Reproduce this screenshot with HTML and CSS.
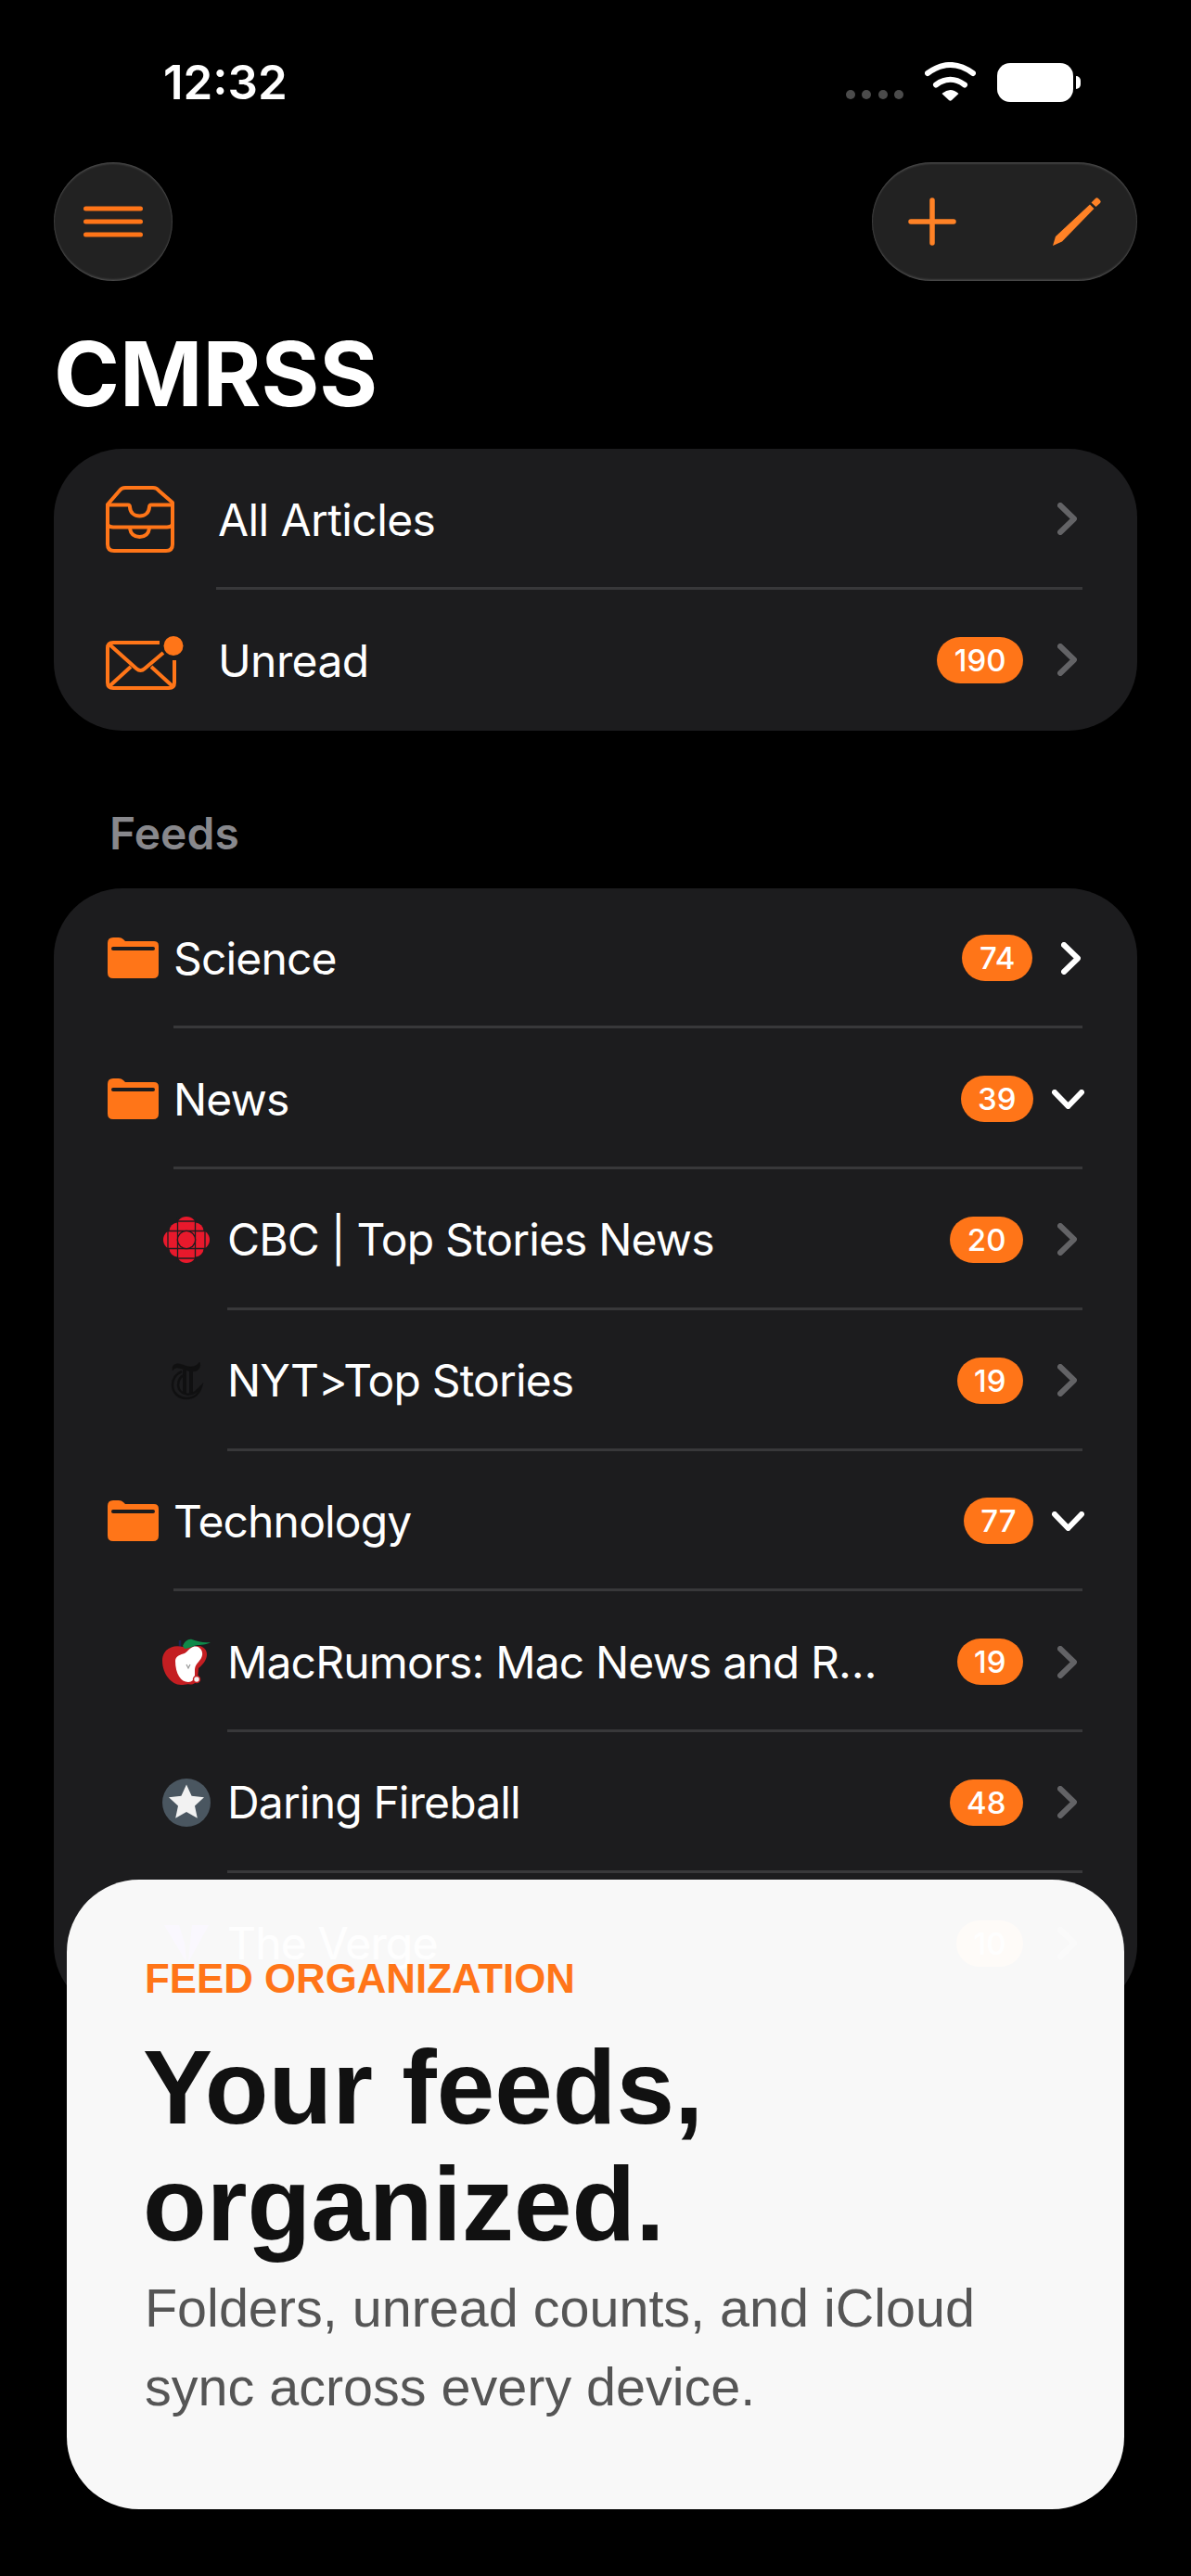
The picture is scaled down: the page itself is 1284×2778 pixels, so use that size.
FILE: index.html
```html
<!DOCTYPE html>
<html lang="en">
  <head>
    <meta charset="UTF-8" />
    <title>CMRSS</title>
    <link rel="stylesheet" href="styles.css">
  </head>
  <body>
    <div class="status-bar">
      <span class="status-time">12:32</span>
      <div class="status-icons">
        <div class="signal"><i></i><i></i><i></i><i></i></div>
        <svg class="wifi" viewBox="0 0 55 42" width="55" height="42">
          <path d="M3 12Q27.5 -6 52 12" fill="none" stroke="#fff" stroke-width="6" stroke-linecap="round" />
          <path d="M12 24.5Q27.5 13 43 24.5" fill="none" stroke="#fff" stroke-width="6" stroke-linecap="round" />
          <path d="M18.5 34Q27.5 26 36.500 34L29 41Q27.500 42.500 26 41Z" fill="#fff" />
        </svg>
        <div class="battery"></div>
      </div>
    </div>

    <main class="screen">
      <div class="toolbar">
        <button class="glass glass-round">
          <svg viewBox="0 0 64 34" width="64" height="34">
            <path d="M2.500 3H61.500M2.500 17H61.500M2.500 31H61.500" stroke="#ff7518" stroke-width="5" stroke-linecap="round" />
          </svg>
        </button>
        <div class="glass glass-pill">
          <svg viewBox="0 0 52 52" width="52" height="52">
            <path d="M26 3V49M3 26H49" stroke="#ff8226" stroke-width="5.500" stroke-linecap="round" />
          </svg>
          <svg viewBox="0 0 56 56" width="56" height="56">
            <path d="M2 54L5 44L42 9.500L46.500 14L12 49.500Z" fill="#ff8226" />
            <path d="M43.500 7.500L48 3Q49.500 1.500 51 3L53 5Q54.500 6.500 53 8L48.500 12Z" fill="#ff8226" />
          </svg>
        </div>
      </div>

      <h1 class="title">CMRSS</h1>

      <section class="group">
        <div class="row row-top">
          <div class="row-icon">
            <svg viewBox="0 0 74 72" width="74" height="72" fill="none" stroke="#ff7518" stroke-width="4">
              <path d="M2 20L15 5Q17 2 21 2H51Q55 2 57 5L72 18V63Q72 70 65 70H9Q2 70 2 63Z" stroke-linejoin="round" />
              <path d="M2 20.500H24Q26 20.500 26 23C26.500 29 31 32.500 36.500 32.500C42 32.500 46.500 29 47 23Q47 20.500 49 20.500H72" />
              <path d="M2 42Q4 44.500 8 44.500H66Q70 44.500 72 42" />
              <path d="M26 46C27 52 31 55 36.500 55C42 55 46 52 47 46" />
            </svg>
          </div>
          <div class="row-main">
            <span class="row-label">All Articles</span>
            <svg class="chev" viewBox="0 0 21 35" width="21" height="35"><path d="M3 3L18 17.500L3 32" /></svg>
          </div>
        </div>
        <div class="row row-top">
          <div class="row-icon">
            <svg class="mail-icon" viewBox="0 0 76 64" width="76" height="64" fill="none" stroke="#ff7518" stroke-width="4">
              <path d="M58 13H8Q2 13 2 19V56Q2 62 8 62H68Q74 62 74 56V32" />
              <path d="M4 15L33 41Q37.500 45 42 41L62 24" />
              <path d="M4 60L27 39M72 60L49 39" />
              <circle cx="73" cy="16.500" r="10.500" fill="#ff7518" stroke="none" />
            </svg>
          </div>
          <div class="row-main no-line">
            <span class="row-label">Unread</span>
            <span class="badge">190</span>
            <svg class="chev" viewBox="0 0 21 35" width="21" height="35"><path d="M3 3L18 17.500L3 32" /></svg>
          </div>
        </div>
      </section>

      <h2 class="section-title">Feeds</h2>

      <section class="group">
        <div class="row row-folder">
          <div class="row-icon">
            <svg viewBox="0 0 55 44" width="55" height="44">
              <path d="M0 6Q0 0 6 0H12Q15 0 17 2L19 4H50Q55 4 55 9V38Q55 44 49 44H6Q0 44 0 38Z" fill="#ff7518" />
              <rect x="4" y="10" width="47" height="4" rx="2" fill="#1c1c1e" />
            </svg>
          </div>
          <div class="row-main">
            <span class="row-label">Science</span>
            <span class="badge">74</span>
            <svg class="chev chev-white" viewBox="0 0 21 35" width="21" height="35"><path d="M3 3L18 17.500L3 32" /></svg>
          </div>
        </div>

        <div class="row row-folder">
          <div class="row-icon">
            <svg viewBox="0 0 55 44" width="55" height="44">
              <path d="M0 6Q0 0 6 0H12Q15 0 17 2L19 4H50Q55 4 55 9V38Q55 44 49 44H6Q0 44 0 38Z" fill="#ff7518" />
              <rect x="4" y="10" width="47" height="4" rx="2" fill="#1c1c1e" />
            </svg>
          </div>
          <div class="row-main">
            <span class="row-label">News</span>
            <span class="badge">39</span>
            <svg class="chev chev-white chev-open" viewBox="0 0 35 21" width="35" height="21"><path d="M3 3L17.500 18L32 3" /></svg>
          </div>
        </div>

        <div class="row row-feed">
          <div class="row-icon">
            <svg viewBox="0 0 50 50" width="50" height="50">
              <g fill="#e8192c">
                <circle cx="25" cy="11" r="11" />
                <circle cx="25" cy="39" r="11" />
                <circle cx="11" cy="25" r="11" />
                <circle cx="39" cy="25" r="11" />
                <circle cx="15.500" cy="15.500" r="9" />
                <circle cx="34.500" cy="15.500" r="9" />
                <circle cx="15.500" cy="34.500" r="9" />
                <circle cx="34.500" cy="34.500" r="9" />
              </g>
              <path d="M15.500 0V50M34.500 0V50M0 15.500H50M0 34.500H50" stroke="#1c1c1e" stroke-width="1.300" />
              <path d="M15.500 5H34.500M15.500 45H34.500M5 15.500V34.500M45 15.500V34.500" stroke="#1c1c1e" stroke-width="1.300" />
              <circle cx="25" cy="25" r="10.300" fill="#1c1c1e" />
              <circle cx="25" cy="25" r="9" fill="#e8192c" />
            </svg>
          </div>
          <div class="row-main">
            <span class="row-label">CBC | Top Stories News</span>
            <span class="badge">20</span>
            <svg class="chev" viewBox="0 0 21 35" width="21" height="35"><path d="M3 3L18 17.500L3 32" /></svg>
          </div>
        </div>

        <div class="row row-feed">
          <div class="row-icon">
            <svg viewBox="0 0 34 42" width="34" height="42" fill="none" stroke="#101011">
              <path d="M2 6C5 1 10 3 16 5C22 7 28 6 31 1C33 6 30 11 24 11C18 11 12 7 7 7C5 7 3 8 2 10Z" fill="#101011" stroke-width="0.500" />
              <path d="M15 9V35" stroke-width="4" />
              <path d="M22 10V34" stroke-width="4" />
              <path d="M12 11C5 14 2 20 2 26C2 34 9 40 17 40C25 40 31 35 33 27L27 33C22 37 13 37 9 30C7 25 8 18 14 15" stroke-width="2.500" />
            </svg>
          </div>
          <div class="row-main">
            <span class="row-label">NYT&gt;Top Stories</span>
            <span class="badge">19</span>
            <svg class="chev" viewBox="0 0 21 35" width="21" height="35"><path d="M3 3L18 17.500L3 32" /></svg>
          </div>
        </div>

        <div class="row row-folder">
          <div class="row-icon">
            <svg viewBox="0 0 55 44" width="55" height="44">
              <path d="M0 6Q0 0 6 0H12Q15 0 17 2L19 4H50Q55 4 55 9V38Q55 44 49 44H6Q0 44 0 38Z" fill="#ff7518" />
              <rect x="4" y="10" width="47" height="4" rx="2" fill="#1c1c1e" />
            </svg>
          </div>
          <div class="row-main">
            <span class="row-label">Technology</span>
            <span class="badge">77</span>
            <svg class="chev chev-white chev-open" viewBox="0 0 35 21" width="35" height="21"><path d="M3 3L17.500 18L32 3" /></svg>
          </div>
        </div>

        <div class="row row-feed">
          <div class="row-icon">
            <svg viewBox="0 0 52 50" width="52" height="50">
              <path d="M19 2V9" stroke="#1b2350" stroke-width="2.500" />
              <path d="M22 9C12 6 0 11 0 24C0 38 10 50 20 50C24 50 26 48.500 30 49.500C34 50 37 47 38 44L39 32C44 28 48 23 48 17C48 12 44 8 39 8C34 8 30 11 22 9Z" fill="#c41e22" />
              <path d="M14 24C14 19 20 17 24 16C28 14 28 11 33 9C39 7 44 12 43 18C42 24 36 26 35 33V40C35 44 32 47 28 47C20 47 14 38 14 24Z" fill="#fff" />
              <path d="M22 8C24 3 28 0 32 1C38 3 44 5 52 4C46 8 38 6 34 8C30 10 26 11 24 11Z" fill="#0f8a4a" />
              <circle cx="37" cy="44" r="3.500" fill="#f4f4f4" stroke="#c41e22" stroke-width="1.500" />
              <path d="M26 28L28 32L30 28" fill="none" stroke="#999" stroke-width="1.200" />
            </svg>
          </div>
          <div class="row-main">
            <span class="row-label">MacRumors: Mac News and R…</span>
            <span class="badge">19</span>
            <svg class="chev" viewBox="0 0 21 35" width="21" height="35"><path d="M3 3L18 17.500L3 32" /></svg>
          </div>
        </div>

        <div class="row row-feed">
          <div class="row-icon">
            <svg viewBox="0 0 52 52" width="52" height="52">
              <circle cx="26" cy="26" r="26" fill="#4a5660" />
              <path d="M26 6.500L31.600 18.800L45 20.300L35 29.400L37.800 42.700L26 36L14.200 42.700L17 29.400L7 20.300L20.400 18.800Z" fill="#f2f2f2" />
            </svg>
          </div>
          <div class="row-main">
            <span class="row-label">Daring Fireball</span>
            <span class="badge">48</span>
            <svg class="chev" viewBox="0 0 21 35" width="21" height="35"><path d="M3 3L18 17.500L3 32" /></svg>
          </div>
        </div>

        <div class="row row-feed">
          <div class="row-icon">
            <svg viewBox="0 0 48 40" width="48" height="40">
              <path d="M0 0H16L22 20L24 40ZM30 0H48L26 40L28 20Z" fill="#5200ff" />
            </svg>
          </div>
          <div class="row-main no-line">
            <span class="row-label">The Verge</span>
            <span class="badge">10</span>
            <svg class="chev" viewBox="0 0 21 35" width="21" height="35"><path d="M3 3L18 17.500L3 32" /></svg>
          </div>
        </div>
      </section>
    </main>

    <aside class="promo">
      <p class="promo-eyebrow">FEED ORGANIZATION</p>
      <h3 class="promo-title">Your feeds,<br>organized.</h3>
      <p class="promo-text">Folders, unread counts, and iCloud<br>sync across every device.</p>
    </aside>
  </body>
</html>
```

FILE: styles.css
```css
body {
  position: relative;
  width: 1284px;
  height: 2778px;
  margin: 0;
  overflow: hidden;
  background-color: #000;
  color: #fff;
  font-family: Inter, "Noto Sans", sans-serif;
}

/* status bar */
.status-bar {
  display: flex;
  justify-content: space-between;
  box-sizing: border-box;
  height: 175px;
  padding: 67px 127px 0 176px;
}
.status-time {
  font-size: 51px;
  font-weight: 600;
  line-height: 44px;
}
.status-icons {
  display: flex;
  align-items: flex-start;
  gap: 23px;
}
.signal {
  display: flex;
  gap: 7.4px;
  margin-top: 30px;
}
.signal i {
  width: 10px;
  height: 10px;
  border-radius: 50%;
  background-color: #4b4b4b;
}
.battery {
  position: relative;
  width: 82px;
  height: 42px;
  margin-top: 1px;
  border-radius: 14px;
  background-color: #fff;
}
.battery::after {
  content: "";
  position: absolute;
  top: 14px;
  left: 85px;
  width: 5px;
  height: 14px;
  border-radius: 0 6px 6px 0;
  background-color: #fff;
}

.screen {
  padding: 0 58px;
}

/* top buttons */
.toolbar {
  display: flex;
  justify-content: space-between;
}
.glass {
  display: flex;
  align-items: center;
  box-sizing: border-box;
  height: 128px;
  padding: 0;
  border: none;
  background-color: #222;
  box-shadow: inset 0 2px 2px rgba(255, 255, 255, 0.13),
    inset 0 -2px 2px rgba(255, 255, 255, 0.13),
    inset 0 0 0 1px rgba(255, 255, 255, 0.05);
}
.glass-round {
  justify-content: center;
  width: 128px;
  border-radius: 50%;
}
.glass-pill {
  justify-content: space-between;
  width: 286px;
  padding: 0 37px 0 39px;
  border-radius: 64px;
}

.title {
  display: flex;
  align-items: center;
  box-sizing: border-box;
  height: 181px;
  margin: 0;
  padding-top: 18px;
  font-size: 96px;
  font-weight: 700;
  line-height: 1;
}

.section-title {
  display: flex;
  align-items: center;
  box-sizing: border-box;
  height: 170px;
  margin: 0;
  padding: 52px 0 0 60px;
  color: #88888c;
  font-size: 48px;
  font-weight: 600;
}

/* grouped lists */
.group {
  border-radius: 74px;
  background-color: #1c1c1e;
}
.row {
  display: flex;
  align-items: center;
  height: 151.75px;
}
.row-icon {
  display: flex;
  align-items: center;
  flex-shrink: 0;
  box-sizing: border-box;
}
.row-icon svg {
  overflow: visible;
}
.row-top .row-icon {
  width: 175px;
  padding-left: 56px;
}
.row-folder .row-icon {
  width: 129px;
  padding-left: 58px;
}
.row-feed .row-icon {
  justify-content: center;
  width: 187px;
  padding: 0 18px 0 117px;
}
.row-main {
  display: flex;
  flex: 1;
  align-items: center;
  height: 100%;
  margin-right: 59px;
  padding-right: 6px;
  box-shadow: inset 0 -3px 0 #38383a;
}
.row-main.no-line {
  box-shadow: none;
}
.row-label {
  flex: 1;
  font-size: 48px;
  font-weight: 400;
  letter-spacing: -0.85px;
  white-space: nowrap;
}
.row-top .row-label {
  padding: 2px 0 0 2px;
  letter-spacing: -0.6px;
}
.badge {
  height: 50px;
  padding: 0 18.5px;
  border-radius: 25px;
  background-color: #ff7518;
  font-size: 33px;
  font-weight: 500;
  line-height: 50px;
}
.chev {
  margin-left: 37px;
  fill: none;
  stroke: #636366;
  stroke-width: 6;
  stroke-linecap: round;
  stroke-linejoin: round;
}
.chev-white {
  margin-left: 31px;
  stroke: #fff;
}
.row-folder .row-main {
  padding-right: 2px;
}
.chev-open {
  margin-right: -4px;
  margin-left: 20px;
}

/* overlay card at the bottom */
.promo {
  position: absolute;
  top: 2027px;
  left: 72px;
  box-sizing: border-box;
  width: 1140px;
  height: 679px;
  padding: 82px 80px 0 84px;
  border-radius: 78px;
  background-color: rgba(254, 254, 254, 0.975);
  font-family: "Liberation Sans", Arial, sans-serif;
}
.promo-eyebrow {
  margin: 0;
  color: #ff7518;
  font-size: 43.8px;
  font-weight: 700;
  line-height: 50px;
}
.promo-title {
  margin: 30px 0 0 -2px;
  color: #111;
  font-size: 112.5px;
  font-weight: 700;
  line-height: 125.5px;
}
.promo-text {
  margin: 7px 0 0;
  color: #555;
  font-size: 57.5px;
  line-height: 85px;
}
```
